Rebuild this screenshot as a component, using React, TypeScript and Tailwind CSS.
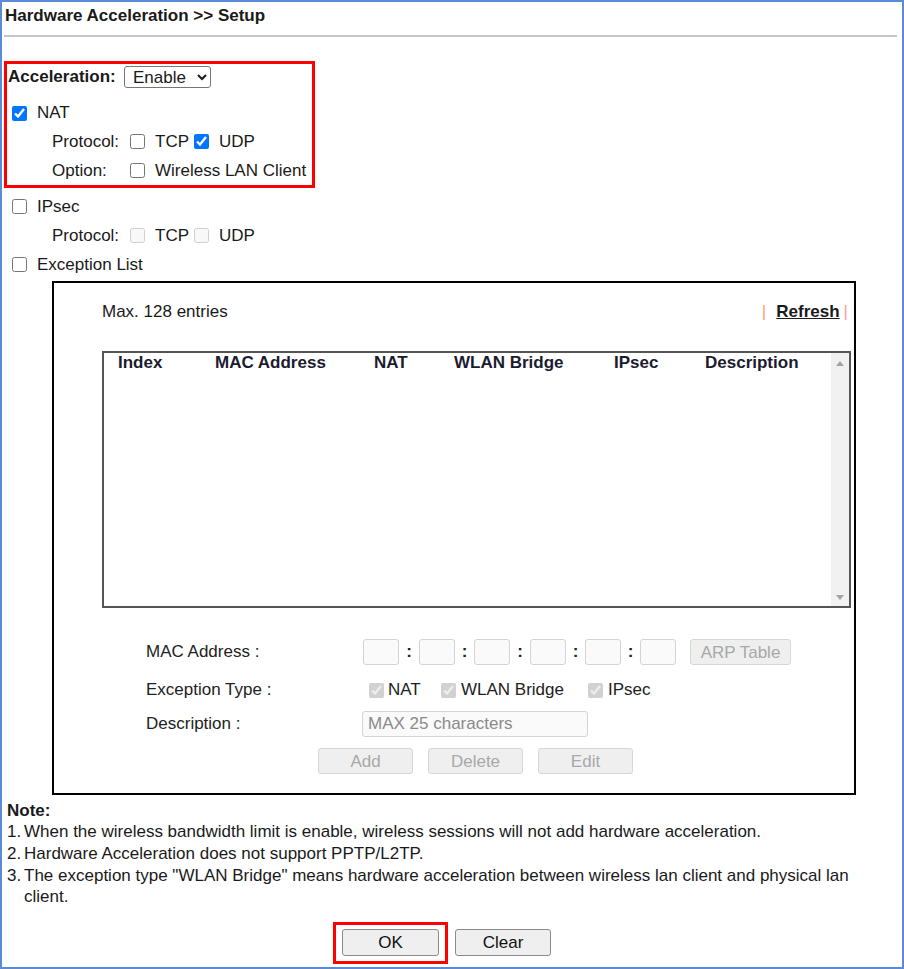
import React from "react";

const Check = ({ checked = false, disabled = false }: { checked?: boolean; disabled?: boolean }) => (
    <input
        type="checkbox"
        defaultChecked={checked}
        disabled={disabled}
        className="m-0 h-[15px] w-[15px] shrink-0 accent-[#0075ff]"
    />
);

const MacBox = () => (
    <input disabled className="h-[26px] w-[36px] rounded-[3px] border border-[#d4d4d4] bg-[#fafafa]" />
);

const SmallButton = ({ label, w }: { label: string; w: string }) => (
    <button
        disabled
        className={`h-[26px] ${w} rounded-[3px] border border-[#d6d6d6] bg-[#efefef] text-[17px] text-[#a8a8a8]`}
    >
        {label}
    </button>
);

export default function App() {
    return (
        <div className="h-[969px] w-[904px] overflow-hidden border-2 border-[#5b8bd6] bg-white font-['Liberation_Sans',Arial,sans-serif] text-[17px] text-[#1a1a1a]">
            {/* title */}
            <div className="pl-[3px] pt-[4px] pb-[9px] text-[17px] font-bold leading-[20px]">Hardware Acceleration &gt;&gt; Setup</div>
            <div className="ml-[2px] mr-[5px] h-[2px] bg-[#c6c6c6]" />

            {/* highlighted NAT block */}
            <div className="ml-[2px] mt-[24px] w-[311px] border-[3px] border-[#ff0000]">
                <div className="flex h-[26px] items-center pl-[1px]">
                    <span className="w-[116px] font-bold">Acceleration:</span>
                    <select defaultValue="Enable" className="h-[22px] w-[87px] rounded-[3px] border border-[#767676] bg-white pl-[4px] text-[17px]">
                        <option>Enable</option>
                        <option>Disable</option>
                    </select>
                </div>
                <div className="mt-[9px] flex h-[28px] items-center gap-[10px] pl-[5px]">
                    <Check checked />
                    <span>NAT</span>
                </div>
                <div className="flex h-[29px] items-center pl-[45px]">
                    <span className="w-[78px]">Protocol:</span>
                    <Check />
                    <span className="ml-[10px] w-[39px]">TCP</span>
                    <Check checked />
                    <span className="ml-[10px]">UDP</span>
                </div>
                <div className="flex h-[29px] items-center pl-[45px]">
                    <span className="w-[78px]">Option:</span>
                    <Check />
                    <span className="ml-[10px]">Wireless LAN Client</span>
                </div>
            </div>

            <div className="mt-[4px] flex h-[29px] items-center gap-[10px] pl-[10px]">
                <Check />
                <span>IPsec</span>
            </div>
            <div className="flex h-[29px] items-center pl-[50px]">
                <span className="w-[78px]">Protocol:</span>
                <Check disabled />
                <span className="ml-[10px] w-[39px]">TCP</span>
                <Check disabled />
                <span className="ml-[10px]">UDP</span>
            </div>
            <div className="flex h-[29px] items-center gap-[10px] pl-[10px]">
                <Check />
                <span>Exception List</span>
            </div>

            {/* exception list panel */}
            <div className="ml-[50px] mt-[2px] h-[514px] w-[804px] border-2 border-black">
                <div className="mt-[19px] flex h-[20px] items-center justify-between pl-[48px] pr-[6px]">
                    <span>Max. 128 entries</span>
                    <span className="flex items-center">
                        <span className="text-[#f7a36a]">|</span>
                        <span className="ml-[10px] font-bold underline">Refresh</span>
                        <span className="ml-[4px] text-[#ff9aa2]">|</span>
                    </span>
                </div>

                <div className="ml-[48px] mt-[29px] flex h-[257px] w-[749px] border-2 border-[#555]">
                    <div className="flex-1">
                        <div className="flex h-[20px] items-center pl-[14px] font-bold text-[#1b1b2f]">
                            <span className="w-[97px]">Index</span>
                            <span className="w-[159px]">MAC Address</span>
                            <span className="w-[80px]">NAT</span>
                            <span className="w-[160px]">WLAN Bridge</span>
                            <span className="w-[91px]">IPsec</span>
                            <span>Description</span>
                        </div>
                    </div>
                    <div className="flex w-[18px] flex-col items-center justify-between bg-[#f1f1f1] pt-[8px] pb-[6px]">
                        <span className="h-0 w-0 border-x-[4px] border-b-[5px] border-x-transparent border-b-[#a3a3a3]" />
                        <span className="h-0 w-0 border-x-[4px] border-t-[5px] border-x-transparent border-t-[#a3a3a3]" />
                    </div>
                </div>

                <div className="mt-[31px] flex h-[26px] items-center pl-[92px] text-[#222]">
                    <span className="w-[217px]">MAC Address :</span>
                    <MacBox />
                    <span className="w-[20px] text-center font-bold">:</span>
                    <MacBox />
                    <span className="w-[19px] text-center font-bold">:</span>
                    <MacBox />
                    <span className="w-[20px] text-center font-bold">:</span>
                    <MacBox />
                    <span className="w-[19px] text-center font-bold">:</span>
                    <MacBox />
                    <span className="w-[19px] text-center font-bold">:</span>
                    <MacBox />
                    <span className="ml-[14px]">
                        <SmallButton label="ARP Table" w="w-[101px]" />
                    </span>
                </div>
                <div className="mt-[12px] flex h-[26px] items-center pl-[92px] text-[#222]">
                    <span className="w-[223px]">Exception Type :</span>
                    <Check checked disabled />
                    <span className="ml-[4px] w-[53px]">NAT</span>
                    <Check checked disabled />
                    <span className="ml-[5px] w-[127px]">WLAN Bridge</span>
                    <Check checked disabled />
                    <span className="ml-[5px]">IPsec</span>
                </div>
                <div className="mt-[8px] flex h-[26px] items-center pl-[92px] text-[#222]">
                    <span className="w-[216px]">Description :</span>
                    <input
                        disabled
                        placeholder="MAX 25 characters"
                        className="h-[26px] w-[226px] rounded-[3px] border border-[#d4d4d4] bg-[#fafafa] px-[5px] text-[17px] placeholder:text-[#8a8a8a]"
                    />
                </div>
                <div className="mt-[11px] flex gap-[15px] pl-[264px]">
                    <SmallButton label="Add" w="w-[95px]" />
                    <SmallButton label="Delete" w="w-[95px]" />
                    <SmallButton label="Edit" w="w-[95px]" />
                </div>
            </div>

            {/* notes */}
            <div className="pl-[5px]">
                <div className="mt-[6px] flex h-[20px] items-center font-bold">Note:</div>
                <ol className="leading-[22px]">
                    <li className="flex"><span className="w-[17px] shrink-0">1.</span><span>When the wireless bandwidth limit is enable, wireless sessions will not add hardware acceleration.</span></li>
                    <li className="flex"><span className="w-[17px] shrink-0">2.</span><span>Hardware Acceleration does not support PPTP/L2TP.</span></li>
                    <li className="flex"><span className="w-[17px] shrink-0">3.</span><span className="w-[840px] leading-[21px]">The exception type "WLAN Bridge" means hardware acceleration between wireless lan client and physical lan client.</span></li>
                </ol>
            </div>

            <div className="mt-[15px] flex items-start pl-[331px]">
                <div className="h-[42px] border-[3px] border-[#ff0000] px-[6px] pt-[4px]">
                    <button className="h-[27px] w-[97px] rounded-[3px] border border-[#8a8a8a] bg-[#efefef] text-[17px] text-[#111]">OK</button>
                </div>
                <button className="ml-[7px] mt-[7px] h-[27px] w-[96px] rounded-[3px] border border-[#8a8a8a] bg-[#efefef] text-[17px] text-[#111]">Clear</button>
            </div>
        </div>
    );
}
